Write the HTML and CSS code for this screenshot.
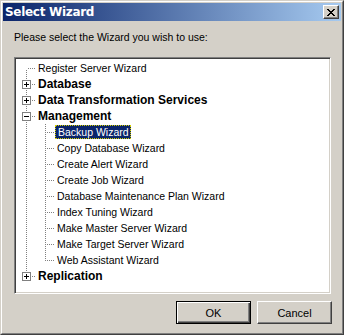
FILE: index.html
```html
<!DOCTYPE html>
<html lang="en">
<head>
    <meta charset="UTF-8">
    <title>Select Wizard</title>
    <link rel="stylesheet" href="styles.css">
</head>
<body>
    <div class="window">
        <div class="frame">
            <div class="titlebar">
                <span class="title">Select Wizard</span>
                <span class="close">
                    <svg width="8" height="7" viewBox="0 0 8 7" shape-rendering="crispEdges">
                        <path d="M0 0h2v1h-2z M6 0h2v1h-2z M1 1h2v1h-2z M5 1h2v1h-2z M2 2h4v1h-4z M3 3h2v1h-2z M2 4h4v1h-4z M1 5h2v1h-2z M5 5h2v1h-2z M0 6h2v1h-2z M6 6h2v1h-2z" fill="#000"/>
                    </svg>
                </span>
            </div>
            <div class="content">
                <div class="prompt">Please select the Wizard you wish to use:</div>
                <div class="tree">
                    <div class="row">
                        <span class="cell first"></span>
                        <span class="label">Register Server Wizard</span>
                    </div>
                    <div class="row">
                        <span class="cell tee"><span class="box plus"></span></span>
                        <span class="label bold">Database</span>
                    </div>
                    <div class="row">
                        <span class="cell tee"><span class="box plus"></span></span>
                        <span class="label bold">Data Transformation Services</span>
                    </div>
                    <div class="row">
                        <span class="cell tee"><span class="box minus"></span></span>
                        <span class="label bold">Management</span>
                    </div>
                    <div class="row">
                        <span class="cell pipe"></span><span class="cell tee"></span>
                        <span class="label selected">Backup Wizard</span>
                    </div>
                    <div class="row">
                        <span class="cell pipe"></span><span class="cell tee"></span>
                        <span class="label">Copy Database Wizard</span>
                    </div>
                    <div class="row">
                        <span class="cell pipe"></span><span class="cell tee"></span>
                        <span class="label">Create Alert Wizard</span>
                    </div>
                    <div class="row">
                        <span class="cell pipe"></span><span class="cell tee"></span>
                        <span class="label">Create Job Wizard</span>
                    </div>
                    <div class="row">
                        <span class="cell pipe"></span><span class="cell tee"></span>
                        <span class="label">Database Maintenance Plan Wizard</span>
                    </div>
                    <div class="row">
                        <span class="cell pipe"></span><span class="cell tee"></span>
                        <span class="label">Index Tuning Wizard</span>
                    </div>
                    <div class="row">
                        <span class="cell pipe"></span><span class="cell tee"></span>
                        <span class="label">Make Master Server Wizard</span>
                    </div>
                    <div class="row">
                        <span class="cell pipe"></span><span class="cell tee"></span>
                        <span class="label">Make Target Server Wizard</span>
                    </div>
                    <div class="row">
                        <span class="cell pipe"></span><span class="cell last"></span>
                        <span class="label">Web Assistant Wizard</span>
                    </div>
                    <div class="row">
                        <span class="cell last"><span class="box plus"></span></span>
                        <span class="label bold">Replication</span>
                    </div>
                </div>
                <div class="buttons">
                    <button class="default">OK</button>
                    <button>Cancel</button>
                </div>
            </div>
        </div>
    </div>
</body>
</html>
```

FILE: styles.css
```css
body {
    margin: 0;
    background: #d4d0c8;
    font-family: "Liberation Sans", Arial, sans-serif;
    font-size: 10.5px;
    color: #000;
}
.window {
    width: 344px;
    height: 335px;
    box-sizing: border-box;
    background: #d4d0c8;
    border: 1px solid;
    border-color: #d4d0c8 #404040 #404040 #d4d0c8;
}
.frame {
    height: 100%;
    box-sizing: border-box;
    border: 1px solid;
    border-color: #fff #808080 #808080 #fff;
    padding: 1px;
    display: flex;
    flex-direction: column;
}
.titlebar {
    height: 18px;
    flex: none;
    display: flex;
    align-items: center;
    justify-content: space-between;
    padding: 0 2px;
    background: linear-gradient(to right, #0a246a, #a6caf0);
}
.title {
    color: #fff;
    font-weight: bold;
    font-size: 12px;
    font-family: "DejaVu Sans", Tahoma, sans-serif;
    letter-spacing: -0.3px;
}
.close {
    width: 16px;
    height: 14px;
    box-sizing: border-box;
    background: #d4d0c8;
    border: 1px solid;
    border-color: #fff #404040 #404040 #fff;
    box-shadow: inset -1px -1px 0 #808080;
    display: flex;
    align-items: center;
    justify-content: center;
}
.content {
    flex: 1;
    display: flex;
    flex-direction: column;
    padding: 0 9px 0 11px;
}
.prompt {
    margin-top: 9px;
    height: 14px;
    line-height: 14px;
}
.tree {
    margin-top: 13px;
    margin-right: 1px;
    height: 237px;
    box-sizing: border-box;
    background: #fff;
    border: 1px solid;
    border-color: #808080 #fff #fff #808080;
    box-shadow: inset 1px 1px 0 #404040, inset -1px -1px 0 #d4d0c8;
    padding: 2px 2px 0 2px;
    display: flex;
    flex-direction: column;
}
.row {
    height: 16px;
    display: flex;
    align-items: center;
}
.cell {
    width: 19px;
    height: 16px;
    flex: none;
    display: flex;
    align-items: center;
    background-repeat: no-repeat;
}
.pipe {
    background-image: repeating-linear-gradient(to bottom, #808080 0 1px, transparent 1px 2px);
    background-size: 1px 16px;
    background-position: 9px 0;
}
.tee {
    background-image: repeating-linear-gradient(to bottom, #808080 0 1px, transparent 1px 2px),
        repeating-linear-gradient(to right, #808080 0 1px, transparent 1px 2px);
    background-size: 1px 16px, 9px 1px;
    background-position: 9px 0, 11px 8px;
}
.first {
    background-image: repeating-linear-gradient(to bottom, #808080 0 1px, transparent 1px 2px),
        repeating-linear-gradient(to right, #808080 0 1px, transparent 1px 2px);
    background-size: 1px 8px, 9px 1px;
    background-position: 9px 10px, 11px 8px;
}
.last {
    background-image: repeating-linear-gradient(to bottom, #808080 0 1px, transparent 1px 2px),
        repeating-linear-gradient(to right, #808080 0 1px, transparent 1px 2px);
    background-size: 1px 9px, 9px 1px;
    background-position: 9px 0, 11px 8px;
}
.box {
    width: 9px;
    height: 9px;
    margin-left: 5px;
    box-sizing: border-box;
    border: 1px solid #808080;
    background-color: #fff;
    background-repeat: no-repeat;
}
.plus {
    background-image: linear-gradient(#000, #000), linear-gradient(#000, #000);
    background-size: 5px 1px, 1px 5px;
    background-position: 1px 3px, 3px 1px;
}
.minus {
    background-image: linear-gradient(#000, #000);
    background-size: 5px 1px;
    background-position: 1px 3px;
}
.label {
    margin-left: 1px;
    padding: 0 1px;
    height: 14px;
    line-height: 14px;
    white-space: nowrap;
}
.bold {
    font-weight: bold;
    font-size: 12px;
}
.selected {
    margin-left: 0;
    padding: 0 2px 0 3px;
    background: #0a246a;
    color: #fff;
    outline: 1px dotted #d4d000;
    outline-offset: -1px;
}
.buttons {
    margin-top: 7px;
    display: flex;
    justify-content: flex-end;
    gap: 6px;
}
.buttons button {
    width: 75px;
    height: 23px;
    box-sizing: border-box;
    font-family: "Liberation Sans", Arial, sans-serif;
    font-size: 11px;
    color: #000;
    background: #d4d0c8;
    border: 1px solid;
    border-color: #fff #404040 #404040 #fff;
    box-shadow: inset -1px -1px 0 #808080, inset 1px 1px 0 #d4d0c8;
    padding: 0;
}
.buttons button.default {
    border-color: #000;
    box-shadow: inset 1px 1px 0 #fff, inset -1px -1px 0 #404040, inset -2px -2px 0 #808080;
}
```
